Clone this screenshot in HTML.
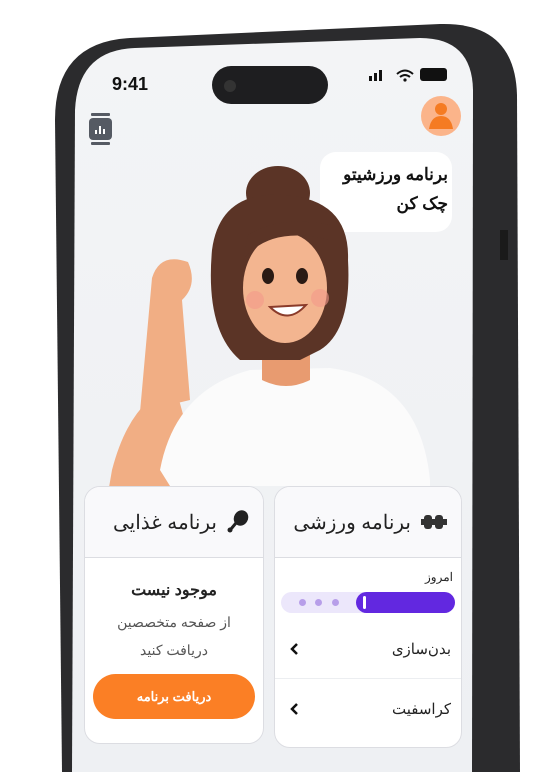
<!DOCTYPE html>
<html><head><meta charset="utf-8"><style>
*{margin:0;padding:0;box-sizing:border-box}
body{width:533px;height:772px;overflow:hidden;background:#fff;position:relative;font-family:"Liberation Sans","Noto Sans CJK SC",sans-serif}
.abs{position:absolute}
.card{position:absolute;background:#fff;border:1px solid #dcdde2;border-radius:16px;overflow:hidden}
.hd{height:71px;background:#f9f9fb;border-bottom:1px solid #dcdde2;display:flex;align-items:center;justify-content:flex-start;padding-right:14px;font-size:20px;color:#222;direction:rtl;white-space:nowrap}
.row{height:60px;display:flex;align-items:center;justify-content:space-between;padding:0 10px 0 14px;font-size:15px;color:#222}
</style></head><body>
<svg class="abs" style="left:0;top:0" width="533" height="772">
<defs><linearGradient id="bg" x1="0" y1="0" x2="0" y2="1"><stop offset="0" stop-color="#f3f4f6"/><stop offset="1" stop-color="#eef0f3"/></linearGradient></defs>
<path d="M130 38 L440 24 Q515 22 517 95 L520 772 L62 772 L55 120 Q55 42 130 38Z" fill="#2b2b2d"/>
<path d="M135 48 L420 38 Q472 38 473 90 L472 772 L72 772 L75 110 Q78 50 135 48Z" fill="url(#bg)"/>
<rect x="500" y="230" width="8" height="30" fill="#1a1a1a"/>
<rect x="212" y="66" width="116" height="38" rx="19" fill="#1e1e20"/>
<circle cx="230" cy="86" r="6" fill="#333"/>
<rect x="369" y="76" width="3" height="5" fill="#111"/><rect x="374" y="73" width="3" height="8" fill="#111"/><rect x="379" y="70" width="3" height="11" fill="#111"/>
<path d="M397 74 Q405 67 413 74 M400 77 Q405 73 410 77" stroke="#111" stroke-width="2" fill="none"/><circle cx="405" cy="80" r="1.6" fill="#111"/>
<rect x="420" y="68" width="27" height="13" rx="3" fill="#111"/>
<rect x="91" y="113" width="19" height="3" rx="1" fill="#555a63"/>
<rect x="89" y="118" width="23" height="22" rx="4" fill="#555a63"/>
<rect x="91" y="142" width="19" height="3" rx="1" fill="#555a63"/>
<rect x="95" y="130" width="2" height="4" fill="#fff"/><rect x="99" y="126" width="2" height="8" fill="#fff"/><rect x="103" y="129" width="2" height="5" fill="#fff"/>
<circle cx="441" cy="116" r="20" fill="#fbb48a"/>
<circle cx="441" cy="109" r="6" fill="#f57b22"/><path d="M429 129 Q431 116 441 116 Q451 116 453 129Z" fill="#f57b22"/>
<rect x="320" y="152" width="132" height="80" rx="16" fill="#fff"/>
<path d="M175 385 Q130 400 112 470 L100 540 L170 540 L190 440Z" fill="#f1ae84"/>
<path d="M152 278 Q160 252 188 262 Q198 285 182 300 L190 400 L140 412 Z" fill="#f1ae84"/>
<path d="M160 470 Q175 390 250 370 L330 368 Q420 380 430 480 L430 486 L170 486Z" fill="#fbfbfb"/>
<path d="M262 330 L310 330 L310 380 Q286 392 262 380Z" fill="#e89b70"/>
<ellipse cx="278" cy="193" rx="32" ry="27" fill="#5b3426"/>
<path d="M212 250 Q220 190 285 195 Q350 200 348 260 Q352 330 320 350 L300 360 L240 360 Q205 330 212 250Z" fill="#5b3426"/>
<ellipse cx="285" cy="288" rx="42" ry="55" fill="#f3b590"/>
<path d="M243 260 Q270 225 330 240 L330 225 Q280 215 248 235Z" fill="#5b3426"/>
<ellipse cx="268" cy="276" rx="6" ry="8" fill="#2a1a14"/><ellipse cx="302" cy="276" rx="6" ry="8" fill="#2a1a14"/>
<path d="M270 307 Q288 325 306 305Z" fill="#fff" stroke="#8a3b2a" stroke-width="2"/>
<circle cx="255" cy="300" r="9" fill="#f39a8a" opacity=".6"/><circle cx="320" cy="298" r="9" fill="#f39a8a" opacity=".6"/>
</svg>
<div class="abs" style="left:324px;top:160px;width:124px;text-align:right;direction:rtl;font-size:17px;font-weight:bold;line-height:29px;color:#111">برنامه ورزشیتو<br>چک کن</div>
<div class="abs" style="left:112px;top:74px;font-size:18px;font-weight:bold;color:#111">9:41</div>

<div class="card" style="left:84px;top:486px;width:180px;height:258px">
<div class="hd"><svg width="22" height="24" viewBox="0 0 22 24" style="margin-left:10px"><ellipse cx="14" cy="8" rx="7" ry="8" fill="#222" transform="rotate(30 14 8)"/><path d="M9 13 L4 19" stroke="#222" stroke-width="3"/><circle cx="3" cy="20" r="2.5" fill="#222"/></svg>برنامه غذایی</div>
<div style="text-align:center;direction:rtl;padding-top:22px;font-size:16px;color:#222;font-weight:bold">موجود نیست</div>
<div style="text-align:center;direction:rtl;font-size:14px;color:#555;line-height:28px;margin-top:8px">از صفحه متخصصین<br>دریافت کنید</div>
<div style="margin:10px 8px 0;height:45px;border-radius:23px;background:#fb7f25;color:#fff;font-size:13px;font-weight:bold;display:flex;align-items:center;justify-content:center">دریافت برنامه</div>
</div>

<div class="card" style="left:274px;top:486px;width:188px;height:262px">
<div class="hd"><span style="display:inline-block;margin-left:10px;width:26px;height:14px;position:relative"><span style="position:absolute;left:3px;top:0;width:8px;height:14px;border-radius:3px;background:#333"></span><span style="position:absolute;left:14px;top:0;width:8px;height:14px;border-radius:3px;background:#333"></span><span style="position:absolute;left:0;top:4px;width:26px;height:6px;background:#333"></span></span>برنامه ورزشی</div>
<div style="text-align:right;direction:rtl;padding:12px 8px 0 0;font-size:12px;color:#222">امروز</div>
<div style="position:relative;margin:8px 6px 0 6px;height:21px;border-radius:11px;background:#ece7fb">
<span class="abs" style="left:18px;top:7px;width:7px;height:7px;border-radius:50%;background:#b79ee9"></span>
<span class="abs" style="left:34px;top:7px;width:7px;height:7px;border-radius:50%;background:#b79ee9"></span>
<span class="abs" style="left:51px;top:7px;width:7px;height:7px;border-radius:50%;background:#b79ee9"></span>
<span class="abs" style="right:0;top:0;width:99px;height:21px;border-radius:11px;background:#6228e0"></span>
<span class="abs" style="left:82px;top:4px;width:3px;height:13px;border-radius:2px;background:#fff"></span>
</div>
<div class="row" style="margin-top:6px;border-bottom:1px solid #eceef1"><svg width="10" height="14"><path d="M8 2 L3 7 L8 12" stroke="#111" stroke-width="2.5" fill="none"/></svg><span>بدن‌سازی</span></div>
<div class="row"><svg width="10" height="14"><path d="M8 2 L3 7 L8 12" stroke="#111" stroke-width="2.5" fill="none"/></svg><span>کراسفیت</span></div>
</div>
</body></html>
